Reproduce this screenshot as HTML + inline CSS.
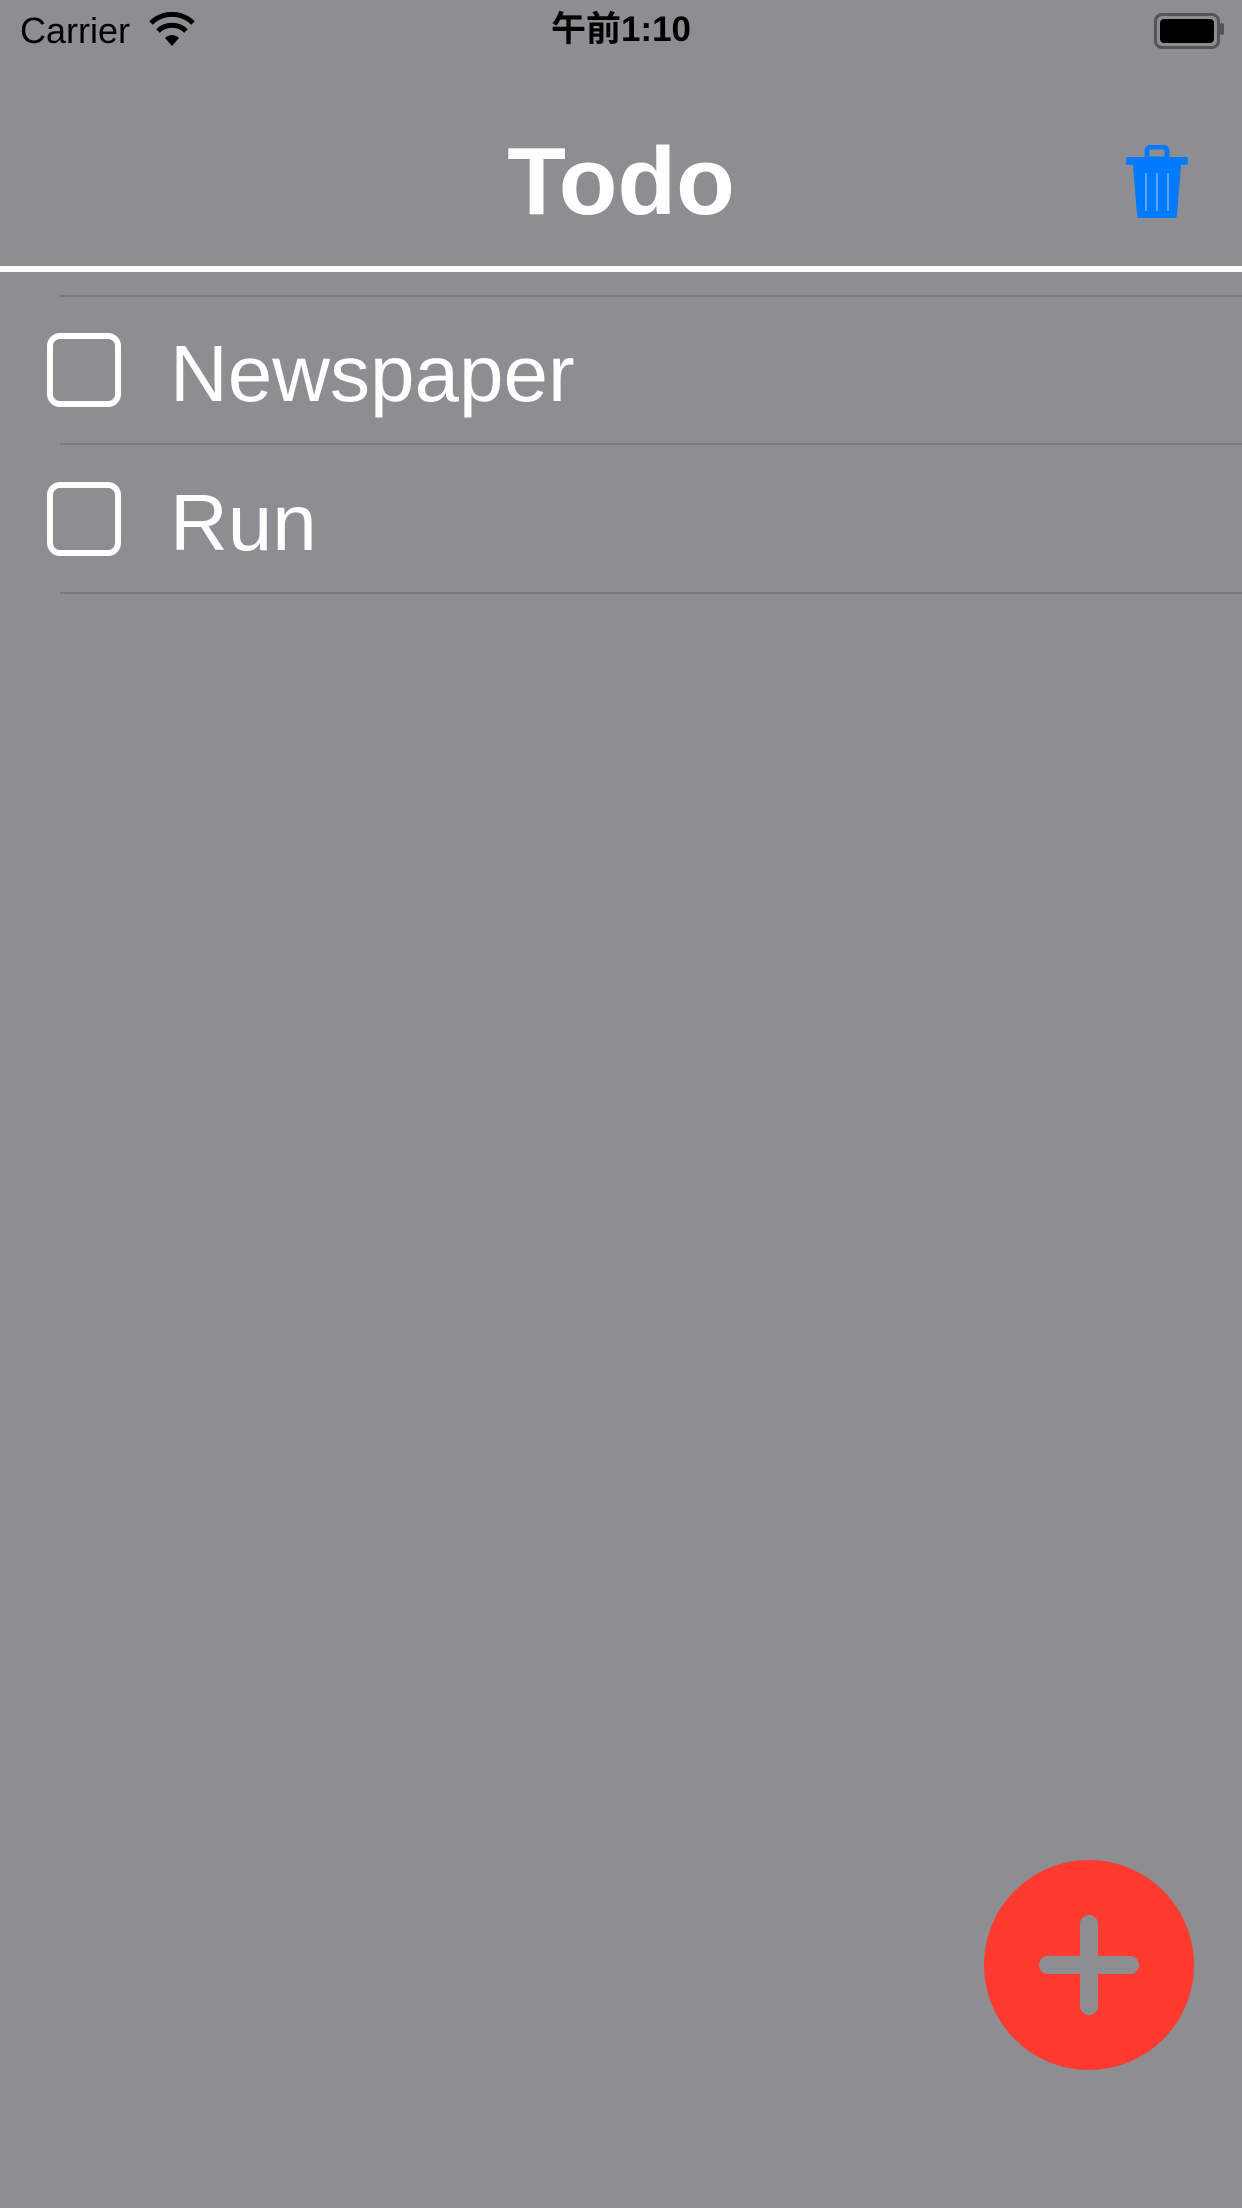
<!DOCTYPE html>
<html><head><meta charset="utf-8"><style>
html,body{margin:0;padding:0}
body{width:1242px;height:2208px;background:#8e8d92;position:relative;overflow:hidden;font-family:"Liberation Sans","Noto Sans CJK JP",sans-serif}
.a{position:absolute}
.sep{position:absolute;left:60px;right:0;height:2px;background:#7a797e}
.cb{position:absolute;left:47px;width:62px;height:62px;border:6px solid #fff;border-radius:13px}
.t{position:absolute;left:170px;font-size:80px;color:#fff;line-height:1}
</style></head><body>
<div class="a" style="left:20px;top:13px;font-size:36px;color:#000;line-height:1">Carrier</div>
<svg class="a" style="left:148px;top:12px" width="48" height="36" viewBox="0 0 48 36"><path d="M24 34 L17 26 A10 10 0 0 1 31 26 Z" fill="#000"/><path d="M10 19 A20 20 0 0 1 38 19" stroke="#000" stroke-width="5" fill="none"/><path d="M3 11 A30 30 0 0 1 45 11" stroke="#000" stroke-width="5" fill="none"/></svg>
<div class="a" style="left:0;width:1242px;text-align:center;top:12px;font-size:35px;font-weight:bold;color:#000;line-height:1">午前1:10</div>
<div class="a" style="left:1154px;top:13px;width:60px;height:30px;border:3px solid #555;border-radius:8px"></div>
<div class="a" style="left:1160px;top:19px;width:54px;height:24px;background:#000;border-radius:4px"></div>
<div class="a" style="left:1220px;top:23px;width:4px;height:12px;background:#555;border-radius:2px"></div>
<div class="a" style="left:0;width:1242px;text-align:center;top:134px;font-size:96px;font-weight:bold;color:#fff;line-height:1">Todo</div>
<svg class="a" style="left:1124px;top:145px" width="66" height="74" viewBox="0 0 66 74"><rect x="23" y="2" width="20" height="12" rx="4" fill="none" stroke="#007aff" stroke-width="5"/><rect x="2" y="12" width="62" height="8" rx="2" fill="#007aff"/><path d="M9 20 L57 20 L53 70 Q53 73 50 73 L16 73 Q13 73 13 70 Z" fill="#007aff"/><path d="M22 28V66M33 28V66M44 28V66" stroke="#5aa6ff" stroke-width="2"/></svg>
<div class="a" style="left:0;top:266px;width:1242px;height:6px;background:#fff"></div>
<div class="sep" style="top:295px"></div>
<div class="sep" style="top:443px"></div>
<div class="sep" style="top:592px"></div>
<div class="cb" style="top:333px"></div>
<div class="cb" style="top:482px"></div>
<div class="t" style="top:334px">Newspaper</div>
<div class="t" style="top:483px">Run</div>
<div class="a" style="left:984px;top:1860px;width:210px;height:210px;border-radius:50%;background:#ff3b30"></div>
<div class="a" style="left:1039px;top:1956px;width:100px;height:18px;border-radius:9px;background:#8e8d92"></div>
<div class="a" style="left:1080px;top:1915px;width:18px;height:100px;border-radius:9px;background:#8e8d92"></div>
</body></html>
